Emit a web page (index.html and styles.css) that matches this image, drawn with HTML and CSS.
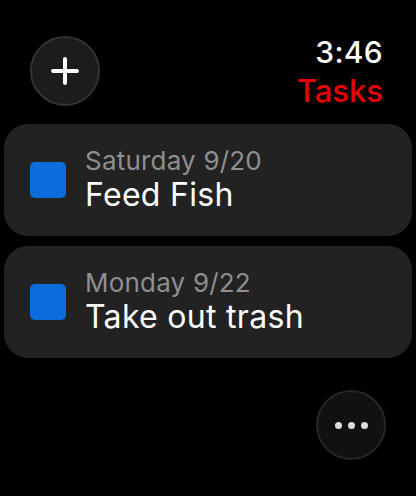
FILE: index.html
```html
<!DOCTYPE html>
<html>
<head>
<meta charset="utf-8">
<link rel="stylesheet" href="styles.css">
</head>
<body>
<div class="screen">
  <header class="header">
    <button class="round-btn add-btn" aria-label="Add">
      <svg width="28" height="28" viewBox="0 0 28 28"><path d="M14 2v24M2 14h24" stroke="#fff" stroke-width="4" stroke-linecap="round" fill="none"/></svg>
    </button>
    <div class="title-col">
      <div class="time">3:46</div>
      <div class="title">Tasks</div>
    </div>
  </header>
  <main class="list">
    <div class="card">
      <span class="check"></span>
      <div class="card-text">
        <div class="date">Saturday 9/20</div>
        <div class="task">Feed Fish</div>
      </div>
    </div>
    <div class="card">
      <span class="check"></span>
      <div class="card-text">
        <div class="date">Monday 9/22</div>
        <div class="task">Take out trash</div>
      </div>
    </div>
  </main>
  <footer class="footer">
    <button class="round-btn more-btn" aria-label="More">
      <span class="dot"></span><span class="dot"></span><span class="dot"></span>
    </button>
  </footer>
</div>
</body>
</html>
```
FILE: styles.css
```css
html, body {
  margin: 0;
  padding: 0;
  background: #000;
}
body {
  font-family: Inter, "Noto Sans", sans-serif;
  color: #fff;
  width: 416px;
  height: 496px;
  overflow: hidden;
}
.screen {
  display: flex;
  flex-direction: column;
}
.header {
  display: flex;
  justify-content: space-between;
  align-items: flex-start;
  padding: 35px 33px 0 30px;
}
.round-btn {
  width: 70px;
  height: 70px;
  border-radius: 50%;
  box-sizing: border-box;
  display: flex;
  align-items: center;
  justify-content: center;
  padding: 0;
}
.add-btn {
  margin-top: 1px;
  background: #1c1c1c;
  border: 2px solid #333;
}
.title-col {
  display: flex;
  flex-direction: column;
  align-items: flex-end;
}
.time {
  font-size: 30px;
  line-height: 34px;
  font-weight: 500;
  letter-spacing: 0.3px;
}
.title {
  margin-top: 4px;
  font-size: 31px;
  line-height: 36px;
  font-weight: 500;
  color: #e60000;
}
.list {
  display: flex;
  flex-direction: column;
  gap: 10px;
  padding: 15px 4px 0;
}
.card {
  height: 112px;
  box-sizing: border-box;
  background: #222;
  border-radius: 24px;
  display: flex;
  align-items: center;
  padding-left: 26px;
  gap: 19px;
}
.check {
  width: 36px;
  height: 36px;
  border-radius: 5px;
  background: #0b6cdc;
  flex: none;
}
.card-text {
  display: flex;
  flex-direction: column;
}
.date {
  font-size: 26px;
  line-height: 30px;
  color: #8e8e93;
  letter-spacing: 0.2px;
}
.task {
  font-size: 32px;
  line-height: 38px;
  color: #fff;
  letter-spacing: 0.3px;
}
.footer {
  display: flex;
  justify-content: flex-end;
  padding: 32px 30px 0 0;
}
.more-btn {
  background: #111;
  border: 2px solid #262626;
  gap: 6px;
}
.dot {
  width: 7px;
  height: 7px;
  border-radius: 50%;
  background: #ddd;
}
```
